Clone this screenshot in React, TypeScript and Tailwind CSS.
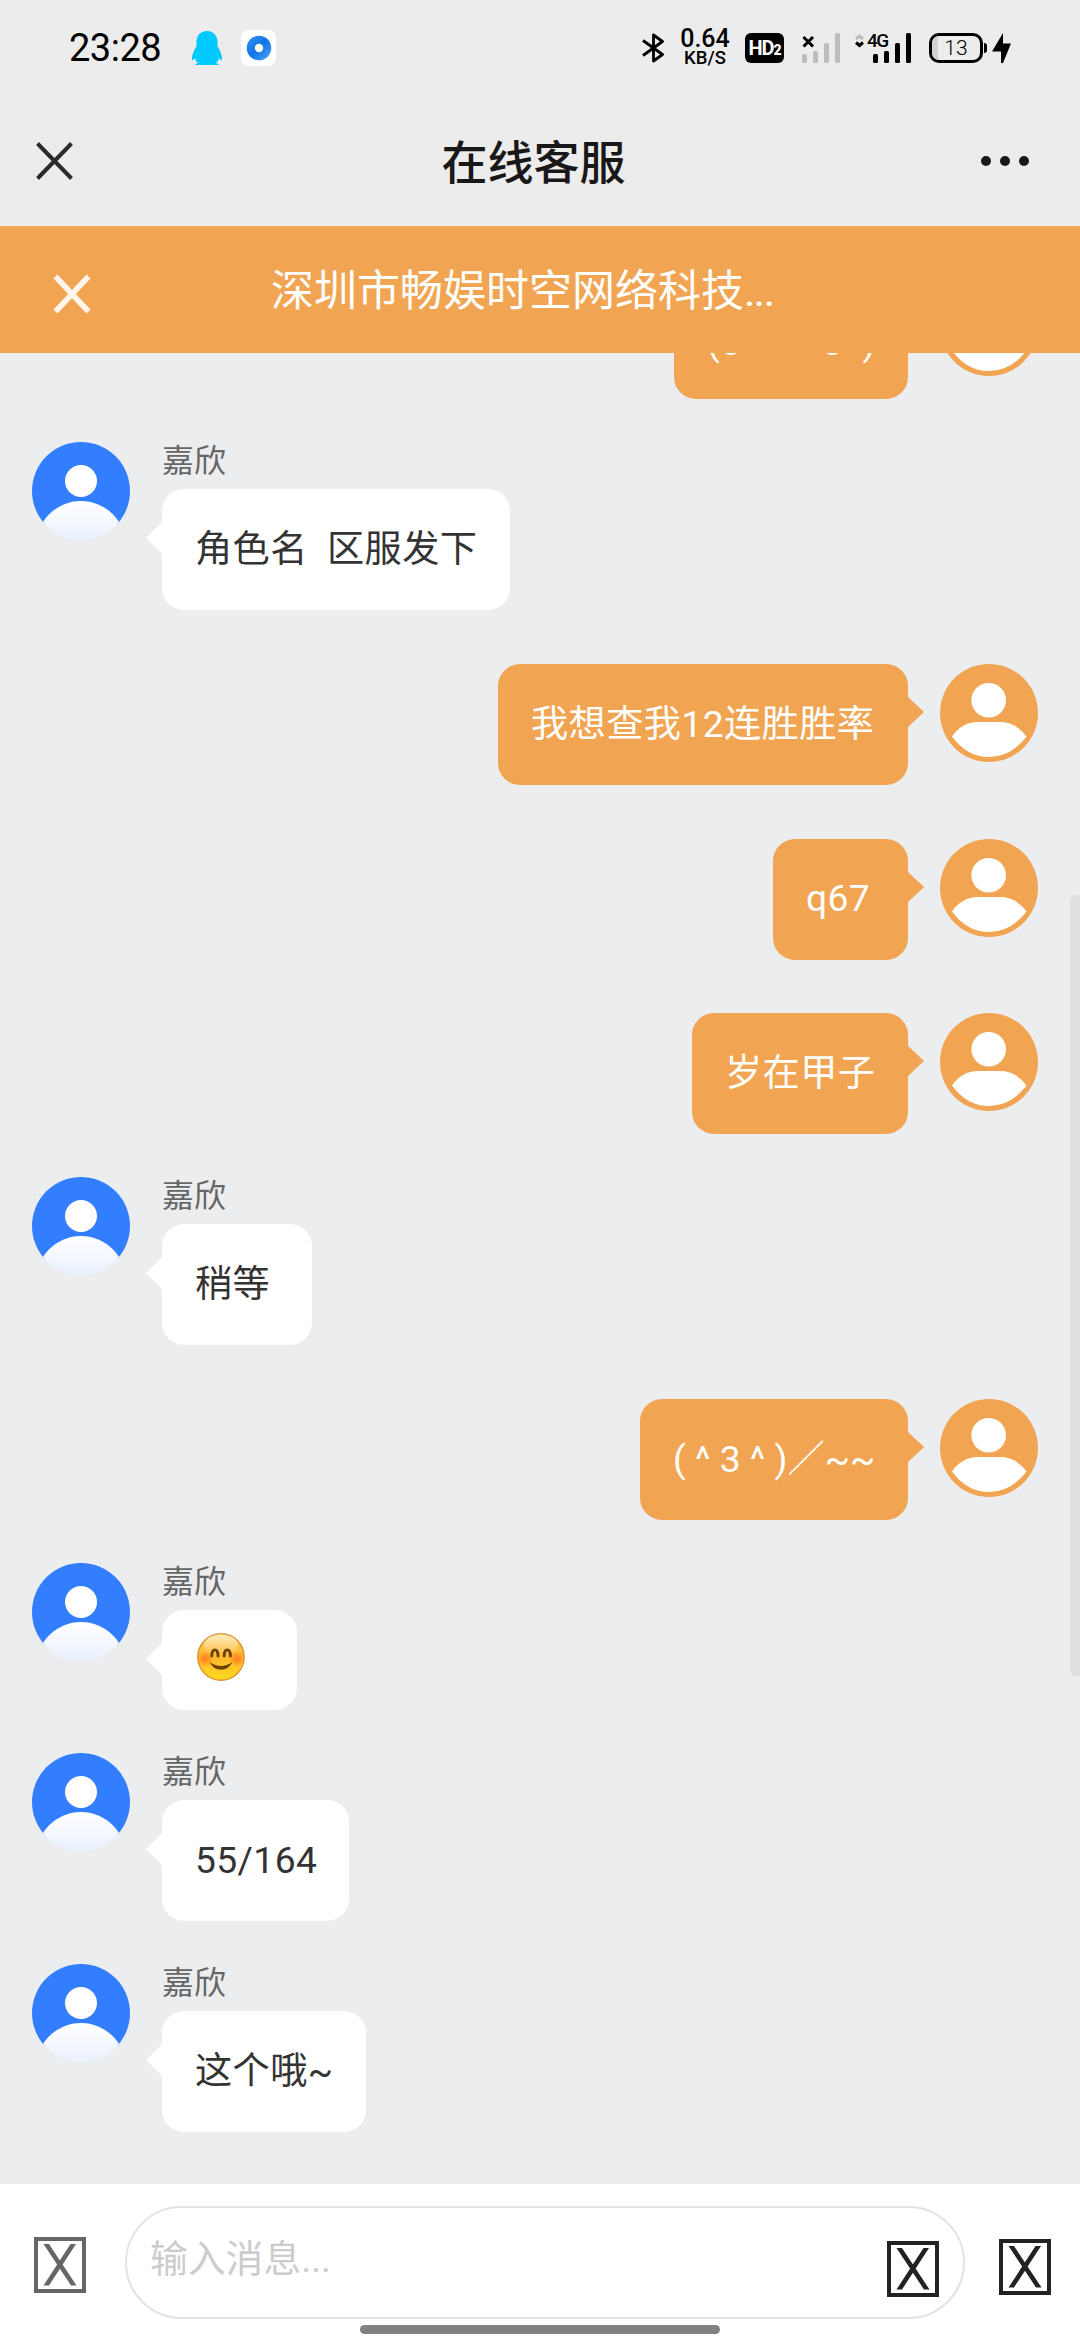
import clsx from "clsx"

interface Message {
  from: "agent" | "me"
  text: string
  width: string
  className?: string
}

const messages: Message[] = [
  { from: "me", text: "(o  ^ ^  o  )", width: "w-[234px]", className: "tracking-[0.4px] pt-2" },
  { from: "agent", text: "角色名  区服发下", width: "w-[348px]" },
  { from: "me", text: "我想查我12连胜胜率", width: "w-[410px]" },
  { from: "me", text: "q67", width: "w-[135px]" },
  { from: "me", text: "岁在甲子", width: "w-[216px]" },
  { from: "agent", text: "稍等", width: "w-[150px]" },
  { from: "me", text: "( ^ 3 ^ )／~~", width: "w-[268px]", className: "tracking-[0]" },
  { from: "agent", text: "😊", width: "w-[135px]" },
  { from: "agent", text: "55/164", width: "w-[187px]" },
  { from: "agent", text: "这个哦~", width: "w-[204px]" },
]

function AgentAvatar({ id }: { id: string }) {
  return (
    <svg viewBox="0 0 98 98" className="w-[98px] h-[98px] shrink-0">
      <defs>
        <linearGradient id={`shade-${id}`} x1="0" y1="0" x2="0" y2="1">
          <stop offset="0" stopColor="#ffffff" />
          <stop offset="0.43" stopColor="#e9f0ff" />
        </linearGradient>
        <clipPath id={`clip-${id}`}>
          <circle cx="49" cy="49" r="49" />
        </clipPath>
      </defs>
      <g clipPath={`url(#clip-${id})`}>
        <rect width="98" height="82" fill="#337eff" />
        <circle cx="49" cy="39" r="16" fill="#fff" />
        <circle cx="49" cy="104" r="45" fill={`url(#shade-${id})`} />
      </g>
    </svg>
  )
}

function UserAvatar() {
  return (
    <svg viewBox="0 0 98 98" className="w-[98px] h-[98px] shrink-0">
      <circle cx="49" cy="49" r="49" fill="#f1a553" />
      <circle cx="48.7" cy="36.2" r="17.3" fill="#fff" />
      <path
        d="M12 72.5Q22 58 38 58H60Q76 58 86.5 72.5Q71 93 49 93Q27 93 12 72.5Z"
        fill="#fff"
      />
    </svg>
  )
}

function Emoji() {
  return (
    <svg viewBox="0 0 48 48" className="w-12 h-12 ml-[2px]">
      <defs>
        <linearGradient id="face" x1="0" y1="0" x2="0" y2="1">
          <stop offset="0" stopColor="#fdc861" />
          <stop offset="0.5" stopColor="#fdb92c" />
          <stop offset="1" stopColor="#ffdb1e" />
        </linearGradient>
        <linearGradient id="gloss" x1="0" y1="0" x2="0" y2="1">
          <stop offset="0" stopColor="#fff3d2" stopOpacity="0.8" />
          <stop offset="1" stopColor="#fff3d2" stopOpacity="0" />
        </linearGradient>
        <radialGradient id="cheek">
          <stop offset="0" stopColor="#fb6a1c" stopOpacity="0.8" />
          <stop offset="1" stopColor="#fb6a1c" stopOpacity="0" />
        </radialGradient>
      </defs>
      <circle cx="24" cy="24" r="23.2" fill="url(#face)" stroke="#e19434" strokeWidth="1.4" />
      <ellipse cx="24" cy="12" rx="17" ry="10.5" fill="url(#gloss)" />
      <circle cx="8" cy="26" r="8" fill="url(#cheek)" />
      <circle cx="40" cy="26" r="8" fill="url(#cheek)" />
      <path
        d="M14.8 23C15 14.8 21 14.8 21 23M27.2 23C27.2 14.8 33.2 14.8 33.4 23"
        fill="none"
        stroke="#6b3f06"
        strokeWidth="2.9"
        strokeLinecap="round"
      />
      <path d="M12.5 29Q24 37 35.5 29Q31.5 36.8 24 36.8Q16.5 36.8 12.5 29Z" fill="#6b3f06" />
    </svg>
  )
}

function Row({ message, index }: { message: Message; index: number }) {
  const { from, text, width, className } = message

  if (from === "me") {
    return (
      <div className="flex justify-end pr-[42px]">
        <div
          className={clsx(
            "relative h-[121px] rounded-[22px] bg-[#f1a553] text-white flex items-center pl-[33px] whitespace-pre mr-8",
            width,
            className ?? "tracking-[0.4px]"
          )}
        >
          {text}
          <svg viewBox="0 0 17 32" className="absolute left-full top-8 -ml-px w-[17px] h-8">
            <path d="M0 0L17 16L0 32Z" fill="#f1a553" />
          </svg>
        </div>
        <UserAvatar />
      </div>
    )
  }

  return (
    <div className="flex pl-8">
      <AgentAvatar id={`${index}`} />
      <div className="ml-8">
        <div className="h-[47px] pt-px text-[32px] leading-9 text-[#666]">嘉欣</div>
        <div
          className={clsx(
            "relative rounded-[22px] bg-white text-[#333] flex items-center pl-[33px] whitespace-pre tracking-[0.4px]",
            text === "😊" ? "h-[100px] pb-[7px]" : "h-[121px]",
            width
          )}
        >
          {text === "😊" ? <Emoji /> : text}
          <svg viewBox="0 0 17 34" className="absolute right-full top-8 -mr-px w-[17px] h-[34px]">
            <path d="M17 0L0 17L17 34Z" fill="#fff" />
          </svg>
        </div>
      </div>
    </div>
  )
}

function Signal({ color }: { color: string }) {
  return (
    <g fill={color}>
      <rect x="0" y="21" width="5" height="9" rx="1.5" />
      <rect x="11" y="18" width="5" height="12" rx="1.5" />
      <rect x="22" y="10" width="5" height="20" rx="1.5" />
      <rect x="33" y="0" width="5" height="30" rx="1.5" />
    </g>
  )
}

function StatusBar() {
  return (
    <div className="h-24 flex items-center pl-[69px] pr-[69px] text-black">
      <div className="w-[123px] text-[38px] leading-none tracking-[-0.5px]">23:28</div>
      <svg viewBox="0 0 30 34" className="w-[30px] h-[34px]">
        <path
          d="M15 0C8 0 4.5 5 4.5 11V15C3 18 0 23 0 27C0 31 2 29 3 27C3.5 30 5 31 6 32C4 32.5 3 33 3.5 34H26.5C27 33 26 32.5 24 32C25 31 26.5 30 27 27C28 29 30 31 30 27C30 23 27 18 25.5 15V11C25.5 5 22 0 15 0Z"
          fill="#02caff"
        />
      </svg>
      <div className="ml-[19px] w-[35px] h-9 rounded-lg bg-white flex items-center justify-center">
        <svg viewBox="0 0 26 26" className="w-[26px] h-[26px]">
          <defs>
            <linearGradient id="ring" x1="0" y1="0" x2="1" y2="1">
              <stop offset="0" stopColor="#3b94ee" />
              <stop offset="0.5" stopColor="#0d74e2" />
              <stop offset="1" stopColor="#55a9f8" />
            </linearGradient>
          </defs>
          <circle cx="13" cy="13" r="12.3" fill="url(#ring)" />
          <circle cx="13" cy="13" r="4.2" fill="#fff" />
        </svg>
      </div>

      <div className="ml-auto flex items-center">
        <svg viewBox="0 0 22 30" className="w-[22px] h-[30px]">
          <path
            d="M1 7.5L20.5 21.5L11.5 28V2L20.5 8.5L1 22.5"
            fill="none"
            stroke="#000"
            strokeWidth="2.8"
            strokeLinejoin="round"
          />
        </svg>
        <div className="ml-[15px] w-[52px] text-center font-medium">
          <div className="text-[25px] leading-[18px]">0.64</div>
          <div className="text-[18.5px] leading-[17px] mt-[2px]">KB/S</div>
        </div>
        <div className="ml-[14px] w-[39px] h-[30px] rounded-md bg-black text-white font-bold flex items-baseline justify-center leading-[30px] text-[20px] tracking-[-1px]">
          HD<span className="text-[14px] font-black">2</span>
        </div>
        <svg viewBox="0 0 39 30" className="ml-[18px] w-[39px] h-[30px]">
          <Signal color="#bdbdbd" />
          <path d="M1.5 4L11 13.5M11 4L1.5 13.5" stroke="#000" strokeWidth="3" />
        </svg>
        <div className="relative ml-[14px] w-14 h-[30px]">
          <svg viewBox="0 0 56 30" className="w-14 h-[30px]">
            <path d="M1 6L4.5 3L8 6" fill="none" stroke="#bdbdbd" strokeWidth="3" />
            <path d="M1 9.5L4.5 12.5L8 9.5" fill="none" stroke="#000" strokeWidth="3" />
            <g transform="translate(18 0)">
              <Signal color="#000" />
            </g>
          </svg>
          <span className="absolute left-[12px] top-0 text-[19px] leading-4 font-medium tracking-[-1.5px]">4G</span>
        </div>
        <div className="relative ml-[18px] w-[54px] h-[30px] rounded-[10px] border-[3px] border-black overflow-hidden flex items-center justify-center text-[21px] leading-none font-light">
          <span className="absolute left-0 top-0 w-[6px] h-full bg-[#d2d2d2]" />
          13
        </div>
        <div className="ml-px w-[3px] h-[10px] rounded-r bg-black" />
        <svg viewBox="0 0 19 30" className="ml-[5px] w-[19px] h-[30px]">
          <path d="M11 0L0 18.5H9V30H11L19 10.5H11Z" fill="#000" />
        </svg>
      </div>
    </div>
  )
}

function MissingGlyph({ color }: { color: string }) {
  return (
    <svg viewBox="0 0 52 56" className="w-[52px] h-14 shrink-0">
      <rect x="2" y="2" width="48" height="52" fill="none" stroke={color} strokeWidth="4" />
      <path d="M9.5 7H15L42.5 48.5H37ZM36.5 7H42L15 48.5H9.5Z" fill={color} />
    </svg>
  )
}

export default function App() {
  return (
    <div className="w-[1080px] h-[2340px] flex flex-col overflow-hidden bg-[#ebedef] text-[37.2px] [font-family:Roboto,'Noto_Sans_CJK_SC',sans-serif]">
      <div className="h-[226px] shrink-0 bg-[#ececec]">
        <StatusBar />
        <div className="h-[130px] flex items-center justify-between pl-9 pr-[50px]">
          <svg viewBox="0 0 37 38" className="w-[37px] h-[38px]">
            <path d="M1.5 1.5L35.5 36.5M35.5 1.5L1.5 36.5" stroke="#2b2b2b" strokeWidth="4" />
          </svg>
          <h1 className="ml-[14px] mt-1 text-[46px] leading-none font-medium text-[#181818]">在线客服</h1>
          <svg viewBox="0 0 50 12" className="w-[50px] h-3">
            <circle cx="6" cy="6" r="5" fill="#181818" />
            <circle cx="25" cy="6" r="5" fill="#181818" />
            <circle cx="44" cy="6" r="5" fill="#181818" />
          </svg>
        </div>
      </div>

      <div className="h-[127px] shrink-0 bg-[#f1a553] flex items-center">
        <svg viewBox="0 0 38 40" className="ml-[53px] mt-[9px] w-[38px] h-10">
          <path d="M2.5 2.5L35.5 37.5M35.5 2.5L2.5 37.5" stroke="#fff5ea" strokeWidth="5.5" />
        </svg>
        <div className="ml-[180px] mt-1 text-[43px] leading-none text-white">
          深圳市畅娱时空网络科技<span className="tracking-[-1.5px]">...</span>
        </div>
      </div>

      <div className="relative flex-1 min-h-0 overflow-hidden">
        <div className="-mt-[75px]">
          {messages.map((message, index) => {
            const previous = messages[index - 1]?.from
            return (
              <div
                key={index}
                className={clsx(
                  message.from === "agent" ? "mb-[43px]" : "h-[174.5px]",
                  message.from === "agent" && previous === "me" && "-mt-[10.5px]",
                  message.from === "me" && previous === "agent" && "mt-[54px]"
                )}
              >
                <Row message={message} index={index} />
              </div>
            )
          })}
        </div>
        <div className="absolute right-0 top-[542px] w-[10px] h-[781px] rounded-l-md bg-[#dddfe1]" />
      </div>

      <div className="h-[156px] shrink-0 bg-white flex flex-col items-center">
        <div className="w-full mt-[22px] flex items-center pl-[34px] pr-[29px]">
          <div className="mt-[5px]">
            <MissingGlyph color="#666" />
          </div>
          <div className="ml-[39px] w-[840px] h-[113px] rounded-full border-2 border-[#e3e3e3] flex items-center justify-between pl-[23px] pr-6">
            <span className="mb-[7px] text-[37.8px] text-[#ccc]">输入消息...</span>
            <div className="mt-3">
              <MissingGlyph color="#222" />
            </div>
          </div>
          <div className="ml-auto mt-[9px]">
            <MissingGlyph color="#222" />
          </div>
        </div>
        <div className="mt-[6px] w-[360px] h-[9px] rounded-full bg-[#818181]" />
      </div>
    </div>
  )
}
